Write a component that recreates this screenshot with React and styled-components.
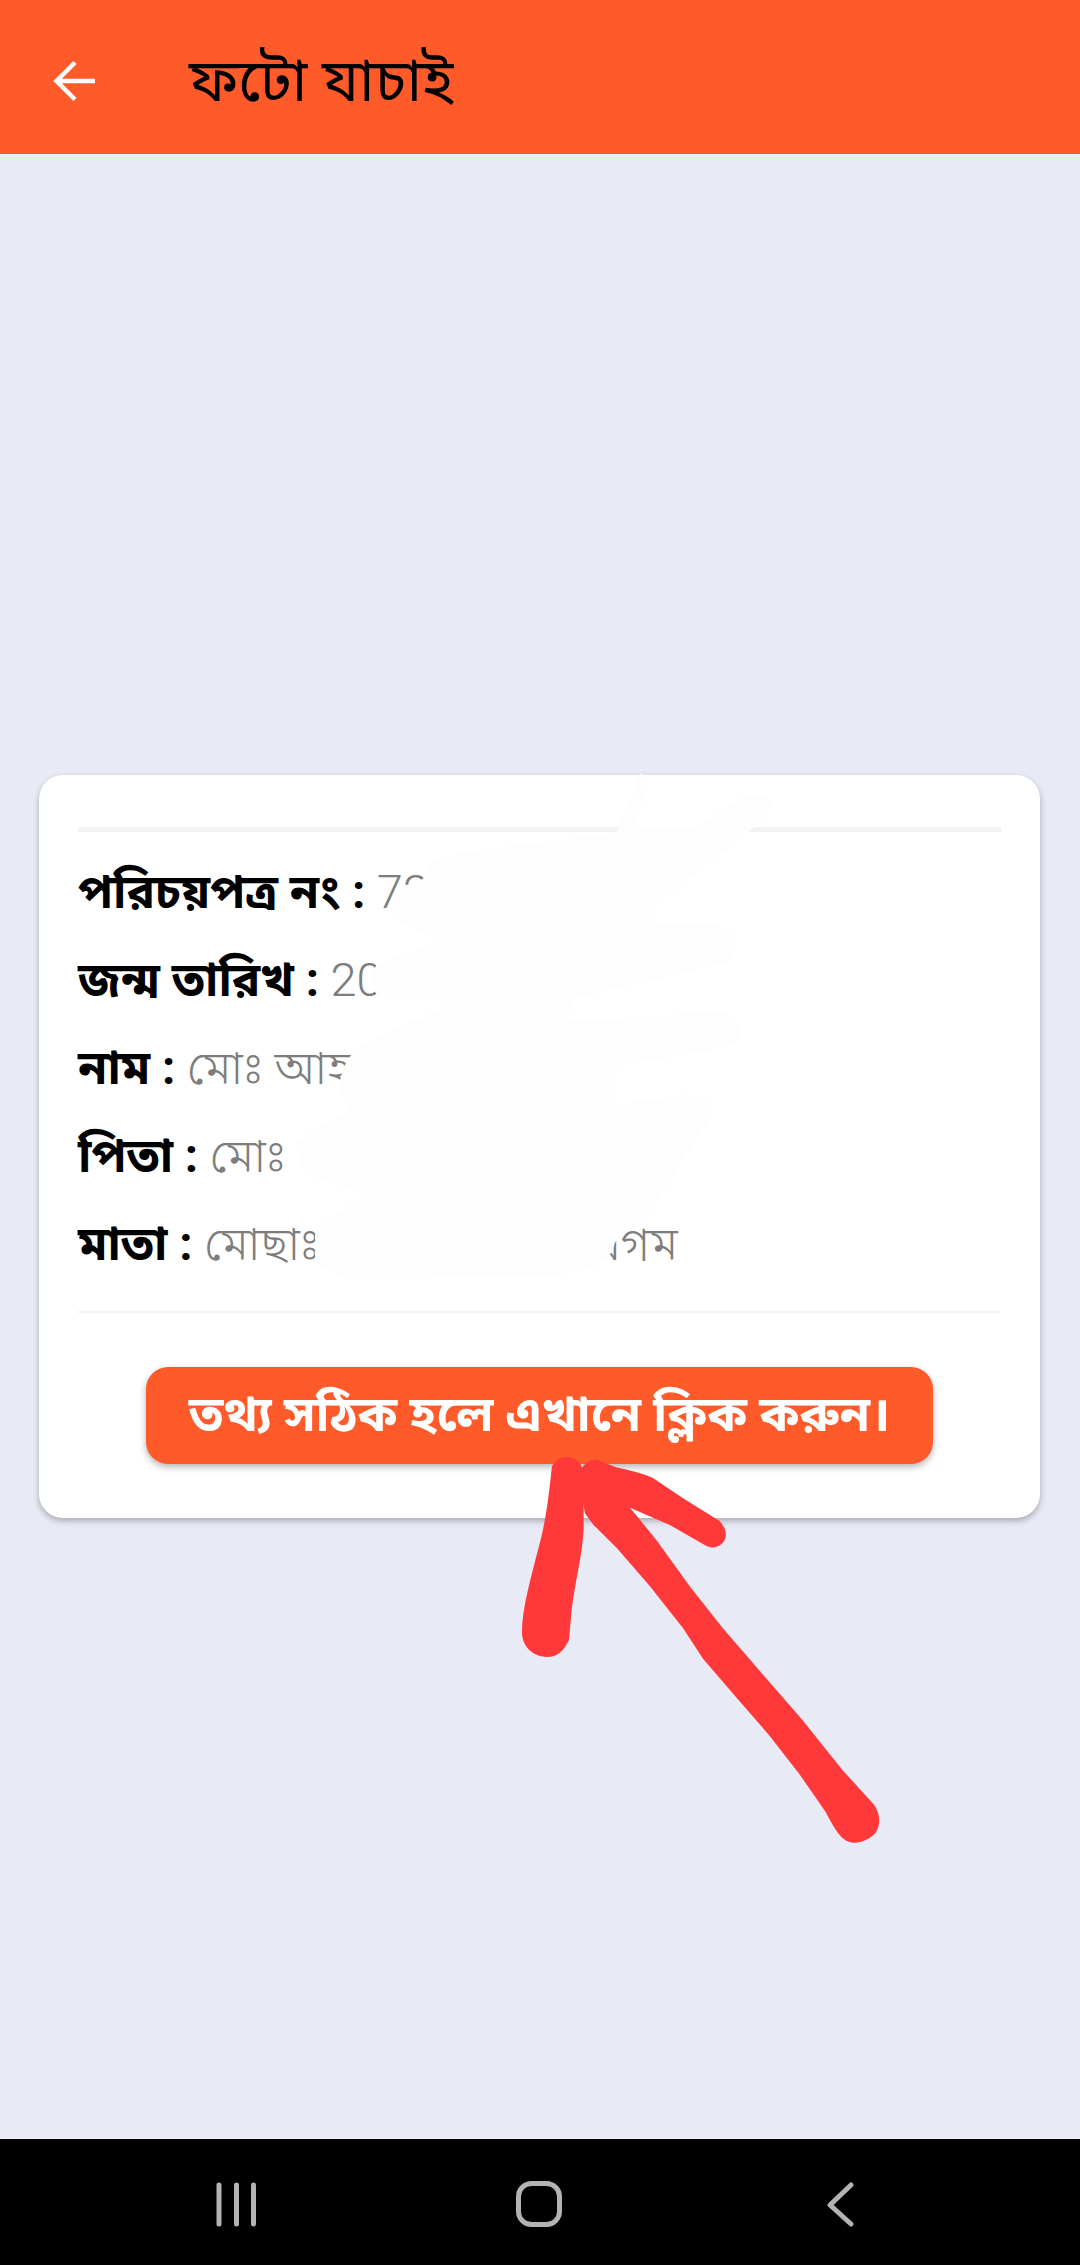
import React from "react";
import styled, { createGlobalStyle } from "styled-components";

const Global = createGlobalStyle`
  html, body { margin: 0; padding: 0; }
  body { font-family: "Roboto", "Noto Sans Bengali", "Noto Sans", sans-serif; background: #e8eaf6; }
`;
const Screen = styled.div`
  position: relative;
  width: 1080px;
  height: 2265px;
  display: flex;
  flex-direction: column;
  overflow: hidden;
  background: #e8eaf6;
`;
const Header = styled.header`
  height: 154px;
  flex: none;
  background: #ff5a2a;
  display: flex;
  align-items: center;
  padding: 8px 0 0 53px;
  box-sizing: border-box;
`;
const Title = styled.h1`
  margin: 0 0 0 94px;
  font-size: 59px;
  line-height: 70px;
  font-weight: 400;
  color: #000;
`;
const Main = styled.main`
  flex: 1;
  display: flex;
  align-items: center;
  padding: 0 40px 0 39px;
`;
const Card = styled.section`
  width: 100%;
  height: 743px;
  box-sizing: border-box;
  background: #fff;
  border-radius: 24px;
  box-shadow: 0 3px 6px rgba(0, 0, 0, 0.28);
  padding: 52px 39px 0;
  display: flex;
  flex-direction: column;
`;
const Rule = styled.hr`
  margin: 0;
  border: 0;
  flex: none;
  height: ${(p) => p.$h}px;
  background: #f3f3f3;
`;
const Rows = styled.div`
  display: flex;
  flex-direction: column;
  padding: 16px 0 23px;
`;
const Row = styled.p`
  margin: 0;
  height: 88px;
  line-height: 88px;
  font-size: 47px;
  font-weight: 300;
  color: #7d7d7d;
  white-space: nowrap;
`;
const Label = styled.b`
  color: #000;
  font-size: 47.3px;
  font-weight: 700;
`;
const Redacted = styled.span`
  display: inline-block;
  width: 234px;
`;
const Action = styled.button`
  align-self: center;
  margin-top: 54px;
  width: 787px;
  height: 97px;
  padding: 5px 0 0;
  border: 0;
  border-radius: 22px;
  background: #ff5a2a;
  color: #fff;
  font: 700 49.2px "Roboto", "Noto Sans Bengali", "Noto Sans", sans-serif;
  box-shadow: 0 3px 7px rgba(0, 0, 0, 0.3);
`;
const NavBar = styled.nav`
  height: 126px;
  flex: none;
  background: #000;
`;
const NavArt = styled.svg`
  display: block;
`;
const Overlay = styled.svg`
  position: absolute;
  left: 0;
  top: 0;
  pointer-events: none;
`;

const rows = [
  ["পরিচয়পত্র নং :", <> 72</>],
  ["জন্ম তারিখ :", <> 20</>],
  ["নাম :", <> মোঃ আহ</>],
  ["পিতা :", <> মোঃ</>],
  ["মাতা :", <> মোছাঃ <Redacted /> বেগম</>],
];

export default function App() {
  return (
    <Screen>
      <Global />
      <Header>
        <svg width="42" height="42" viewBox="0 0 42 42" fill="none" stroke="#fff" strokeWidth="4.5" aria-hidden="true">
          <path d="M42 21H4M22 2.5 3.5 21 22 39.5" />
        </svg>
        <Title>ফটো যাচাই</Title>
      </Header>
      <Main>
        <Card>
          <Rule $h={5} />
          <Rows>
            {rows.map(([k, v]) => (
              <Row key={k}>
                <Label>{k}</Label>
                {v}
              </Row>
            ))}
          </Rows>
          <Rule $h={2} />
          <Action>তথ্য সঠিক হলে এখানে ক্লিক করুন।</Action>
        </Card>
      </Main>
      <NavBar>
        <NavArt width="1080" height="126" viewBox="0 2139 1080 126" fill="none" stroke="#b3b3b3" strokeLinecap="round">
          <path d="M219 2185V2224M236.5 2185V2224M253.5 2185V2224" strokeWidth="5" />
          <rect x="518.5" y="2183.5" width="41" height="41" rx="13" strokeWidth="5" />
          <path d="M851 2185 830 2205 851 2224" strokeWidth="5" strokeLinejoin="round" />
        </NavArt>
      </NavBar>
      <Overlay width="1080" height="2265" viewBox="0 0 1080 2265" fill="none" aria-hidden="true">
        <g transform="translate(20,760) scale(0.6631,0.3448)" fill="#fdfdfd">
          <path d="M935 40C950 45 950 70 945 90L925 190L1020 195L1090 105C1120 90 1140 110 1130 150C1100 220 1040 290 960 420L960 470L1050 480C1085 500 1090 560 1060 590L840 690L820 760L1050 730C1090 740 1100 800 1070 830L900 890L900 1000L1000 970C1040 970 1050 1010 1040 1040L950 1310L897 1400C892 1450 870 1480 820 1490L520 1510C470 1500 440 1470 445 1420L445 1360L520 1260L430 1200L415 1110L500 1010L480 960C485 900 490 860 520 820L660 700L560 700C520 680 525 620 540 590L640 520C580 490 550 460 560 420L610 340L625 290C650 265 750 250 900 210Z" />
        </g>
        <g transform="translate(20,1280) scale(0.6631,0.3827)" fill="#ff3939">
          <path d="M825 462C842 466 848 480 850 510L850 650C848 720 838 780 832 860L828 940C820 970 810 985 795 985C772 985 757 955 757 920C757 860 770 780 785 680C795 610 798 550 802 490C805 472 814 462 825 462Z" />
          <path d="M870 470L900 490C925 500 940 505 955 518L1000 570L1055 630C1066 650 1068 675 1058 690C1050 702 1040 702 1030 690L980 640L920 595L960 680L1010 800L1060 910L1120 1030L1180 1150L1240 1280L1285 1365C1296 1385 1300 1420 1290 1445C1280 1465 1262 1475 1250 1468C1238 1460 1230 1440 1215 1390L1175 1290L1130 1190L1080 1090L1030 990L1000 910L950 800L900 700L865 640L852 610L842 510C848 480 860 468 870 470Z" />
        </g>
      </Overlay>
    </Screen>
  );
}
